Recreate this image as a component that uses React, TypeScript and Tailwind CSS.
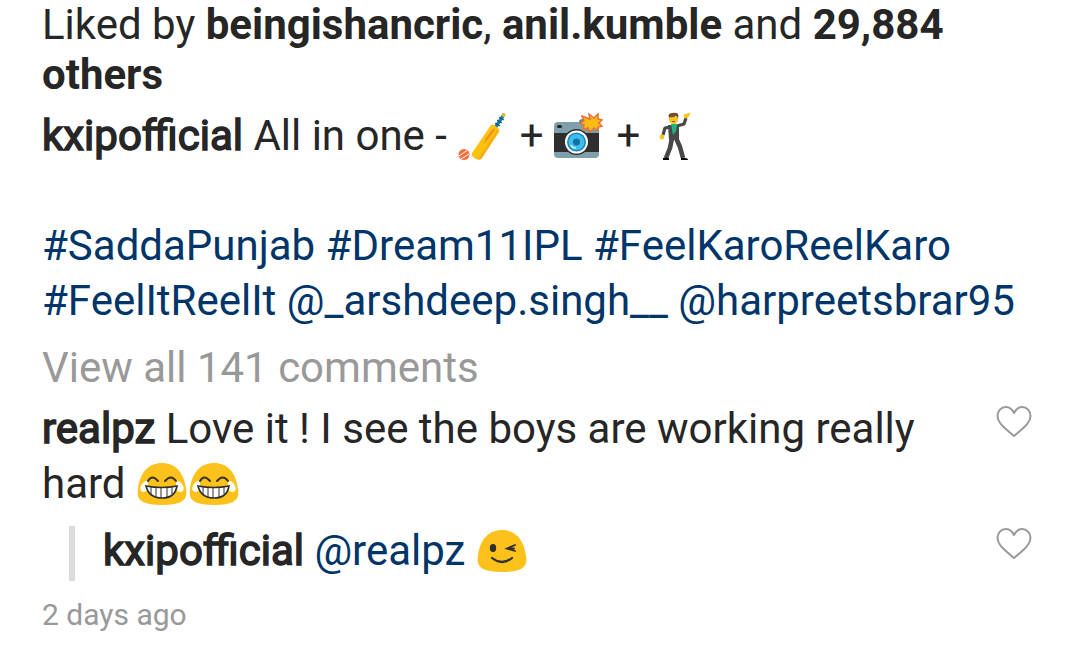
import { useState } from "react";

const BatEmoji = () => (
  <svg viewBox="2 0 52 52" className="inline-block w-[52px] h-[52px] align-[-10px]" role="img" aria-label="cricket bat">
    <path d="M40 20 L48 8" stroke="#1b7ea6" strokeWidth="3.400" />
    <path d="M40 15l5 3M42 12l5 3M44 9l5 3" stroke="#0b4667" strokeWidth="1" />
    <circle cx="48.500" cy="7" r="2" fill="#d9b92e" />
    <path d="M36 17 Q37 16 39 17 L43 20 Q45 21 44 24 L27 50 Q25 53 21 51 L18 49 Q16 47 17 45Z" fill="#fdc10f" />
    <path d="M39 20 L40 22 L29 36 L31 30Z" fill="#f58a1f" />
    <path d="M44 23 L27 50 Q25 52 23 51 L42 22Z" fill="#f5ae18" />
    <circle cx="9" cy="46.500" r="5.500" fill="#f4703c" />
    <path d="M4 48 L12 42.500M6 51 L14 46" stroke="#fff" strokeWidth="1" />
  </svg>
);

const CameraEmoji = () => (
  <svg viewBox="3 0 52 52" className="inline-block w-[52px] h-[52px] align-[-10px] overflow-visible" role="img" aria-label="camera with flash">
    <path d="M28 18 V14 Q28 11 32 11 H42 V18Z" fill="#5f8088" />
    <rect x="3" y="14" width="45" height="36" rx="4" fill="#7fa0aa" />
    <rect x="3" y="25" width="45" height="19" fill="#2f2f2f" />
    <rect x="6" y="17" width="5" height="3" rx="1.500" fill="#222" />
    <circle cx="25.500" cy="34" r="13" fill="#2f2f2f" />
    <circle cx="25.500" cy="34" r="11.500" fill="#fff" />
    <circle cx="25.500" cy="34" r="9.500" fill="#1787bd" />
    <circle cx="25.500" cy="34" r="8" fill="#42bdea" />
    <circle cx="25.500" cy="34" r="3.500" fill="#0d72a8" />
    <path d="M20 37 Q21 40 25 40" stroke="#c8effc" strokeWidth="1.500" fill="none" />
    <path
      d="M39 11 L38 6 L43 10 L47 6 L47 11 L51 12 L48 15 L51 18 L47 19 L47 23 L43 20 L39 24 L37 20 L32 22 L33 17 L29 15 L33 13 L31 8Z"
      fill="#fcbb14"
      stroke="#e8703a"
      strokeWidth="1.500"
    />
  </svg>
);

const DancerEmoji = () => (
  <svg viewBox="3 0 52 52" className="inline-block w-[52px] h-[52px] align-[-10px]" role="img" aria-label="man dancing">
    <g fill="none" stroke="#484848" strokeLinejoin="round">
      <path d="M22 19 L17 20 L15 27" strokeWidth="3.200" />
      <path d="M29 18 L36 16 L38 10" strokeWidth="3.200" />
      <path d="M24 30 L22 40 L18 50" strokeWidth="4.600" />
      <path d="M28 30 L32 39 L35 50" strokeWidth="4.600" />
    </g>
    <path d="M20 17 H31 L31 31 L21 32Z" fill="#484848" />
    <path d="M23 16 H29 L28 23 L25 27Z" fill="#1eb47d" />
    <path d="M21 9 H30 V12 Q29 16 25.500 16 Q22 16 21 12Z" fill="#fcc21b" />
    <path d="M21 10 Q19 5 25 5 Q32 4 30 10 L28 8 Q25 10 22 9Z" fill="#78502f" />
    <path d="M24 13.500h3" stroke="#9a5b22" strokeWidth="1" />
    <circle cx="14" cy="29" r="2.400" fill="#fcc21b" />
    <path d="M37 10 L36 7 L42 5 L40 9Z" fill="#fcc21b" stroke="#fcc21b" strokeWidth="1" strokeLinejoin="round" />
    <path d="M15 52 V50 Q17 49 21 50 V52ZM33 52 V50 H37 Q40 50 40 52Z" fill="#000" />
  </svg>
);

const Face = ({ children, label }: { children: React.ReactNode; label: string }) => (
  <svg viewBox="0 0 52 52" className="inline-block w-[52px] h-[52px] align-[-10px]" role="img" aria-label={label}>
    <path d="M26 7 C13 7 4 16 2 33 C1 39 2 43 7 46 Q13 49 26 49 Q39 49 45 46 C50 43 51 39 50 33 C48 16 39 7 26 7Z" fill="#fcc21b" />
    {children}
  </svg>
);

const JoyEmoji = () => (
  <Face label="tears of joy">
    <path d="M12 25 Q9 24 6 28 Q3 32 5 35 Q9 38 12 33ZM40 25 Q43 24 46 28 Q49 32 47 35 Q43 38 40 33Z" fill="#fffdf0" />
    <path d="M12 25 Q16 18 22 25M29 25 Q35 18 40 25" fill="none" stroke="#3b321d" strokeWidth="2" strokeLinecap="round" />
    <path d="M10 30 Q26 33 41 30 Q39 42 26 42 Q13 42 10 30Z" fill="#fff" stroke="#2f2f2f" strokeWidth="1.600" />
    <path d="M15 31v7M20 32v9M25 32v10M31 32v9M36 31v7" stroke="#2f2f2f" strokeWidth="1" />
  </Face>
);

const WinkEmoji = () => (
  <Face label="winking face">
    <ellipse cx="17" cy="25" rx="3.200" ry="4" fill="#2f2f2f" />
    <path d="M39 22 L31 25.500 L39 28M31 25.500 H38" fill="none" stroke="#2f2f2f" strokeWidth="1.800" strokeLinecap="round" />
    <path d="M16 35 Q26 43 36 35" fill="none" stroke="#2f2f2f" strokeWidth="2.200" strokeLinecap="round" />
  </Face>
);

const LikeButton = ({ label }: { label: string }) => {
  const [liked, setLiked] = useState(false);
  return (
    <button aria-label={label} aria-pressed={liked} onClick={() => setLiked(!liked)} className="mt-1 shrink-0">
      <svg viewBox="0 0 36 34" className="w-9 h-[34px]" fill={liked ? "#ed4956" : "none"} stroke={liked ? "#ed4956" : "#999"} strokeWidth="2">
        <path d="M18 8 C16 4 13 2 10 2 C5 2 1.500 6 1.500 11 C1.500 18 9 23 18 31 C27 23 34.500 18 34.500 11 C34.500 6 31 2 26 2 C23 2 20 4 18 8Z" strokeLinejoin="round" />
      </svg>
    </button>
  );
};

const Username = ({ name }: { name: string }) => (
  <a href={`#${name}`} className="[-webkit-text-stroke:1.5px_#262626]">
    {name}
  </a>
);

const Tag = ({ text }: { text: string }) => (
  <a href="#tag" className="text-[#003569]">
    {text}
  </a>
);

export default function App() {
  return (
    <main className="bg-white text-[#262626] font-[Roboto,sans-serif] text-[42px] leading-[55px] pl-[42px] pr-12 pb-4">
      <p className="leading-[50px]">
        Liked by <a href="#beingishancric" className="font-bold">beingishancric</a>,{" "}
        <a href="#anil.kumble" className="font-bold">anil.kumble</a> and{" "}
        <a href="#likes" className="font-bold">29,884 others</a>
      </p>

      <div className="mt-2">
        <p>
          <Username name="kxipofficial" /> All in one - <BatEmoji /> + <CameraEmoji /> + <DancerEmoji />
        </p>
        <p className="mt-[55px]">
          <Tag text="#SaddaPunjab" /> <Tag text="#Dream11IPL" /> <Tag text="#FeelKaroReelKaro" />{" "}
          <Tag text="#FeelItReelIt" /> <Tag text="@_arshdeep.singh__" /> <Tag text="@harpreetsbrar95" />
        </p>
      </div>

      <button className="block mt-[15px] leading-[50px] text-[#999]">View all 141 comments</button>

      <div className="mt-2 flex items-start justify-between gap-16">
        <p>
          <Username name="realpz" /> Love it ! I see the boys are working really hard <span className="whitespace-nowrap"><JoyEmoji /><JoyEmoji /></span>
        </p>
        <LikeButton label="Like comment by realpz" />
      </div>

      <div className="mt-3 flex items-start justify-between">
        <div className="ml-[27px] flex">
          <div className="mt-[3px] mr-7 w-1.5 h-[55px] bg-[#dbdbdb]" />
          <p>
            <Username name="kxipofficial" /> <Tag text="@realpz" /> <WinkEmoji />
          </p>
        </div>
        <LikeButton label="Like reply by kxipofficial" />
      </div>

      <time className="block mt-4 text-[30px] leading-9 text-[#999]">2 days ago</time>
    </main>
  );
}
